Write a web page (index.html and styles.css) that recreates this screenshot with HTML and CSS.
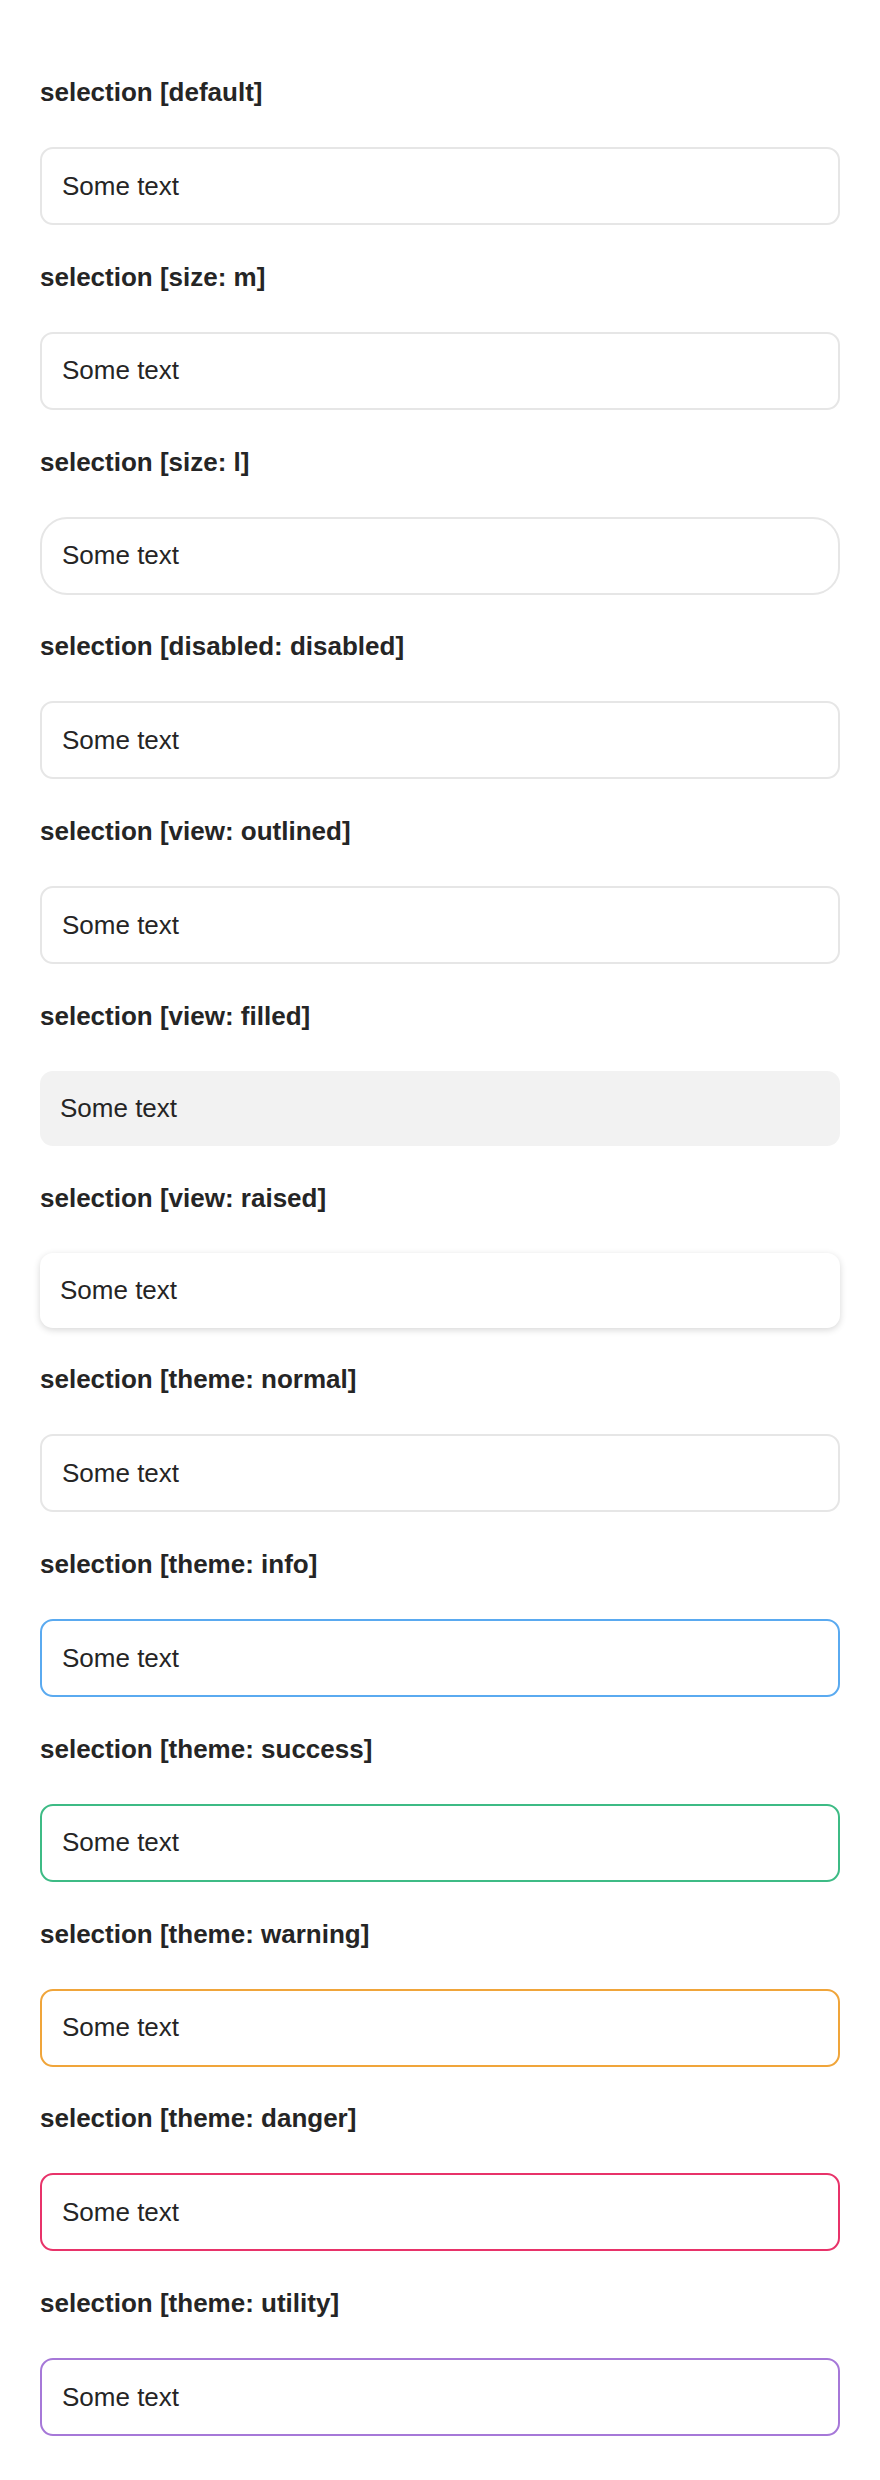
FILE: index.html
```html
<!DOCTYPE html>
<html>
<head>
<meta charset="utf-8">
<link rel="stylesheet" href="styles.css">
</head>
<body>
<main class="page">
  <section class="case"><h3 class="title">selection [default]</h3><div class="field"><span>Some text</span></div></section>
  <section class="case"><h3 class="title">selection [size: m]</h3><div class="field"><span>Some text</span></div></section>
  <section class="case"><h3 class="title">selection [size: l]</h3><div class="field field--l"><span>Some text</span></div></section>
  <section class="case"><h3 class="title">selection [disabled: disabled]</h3><div class="field"><span>Some text</span></div></section>
  <section class="case"><h3 class="title">selection [view: outlined]</h3><div class="field"><span>Some text</span></div></section>
  <section class="case"><h3 class="title">selection [view: filled]</h3><div class="field field--filled"><span>Some text</span></div></section>
  <section class="case"><h3 class="title">selection [view: raised]</h3><div class="field field--raised"><span>Some text</span></div></section>
  <section class="case"><h3 class="title">selection [theme: normal]</h3><div class="field"><span>Some text</span></div></section>
  <section class="case"><h3 class="title">selection [theme: info]</h3><div class="field field--info"><span>Some text</span></div></section>
  <section class="case"><h3 class="title">selection [theme: success]</h3><div class="field field--success"><span>Some text</span></div></section>
  <section class="case"><h3 class="title">selection [theme: warning]</h3><div class="field field--warning"><span>Some text</span></div></section>
  <section class="case"><h3 class="title">selection [theme: danger]</h3><div class="field field--danger"><span>Some text</span></div></section>
  <section class="case"><h3 class="title">selection [theme: utility]</h3><div class="field field--utility"><span>Some text</span></div></section>
</main>
</body>
</html>
```

FILE: styles.css
```css
* { box-sizing: border-box; }
html, body { margin: 0; padding: 0; background: #fff; }
body {
  font-family: "Liberation Sans", Arial, sans-serif;
  color: #252525;
}
.page {
  padding: 73px 40px 40px;
  display: flex;
  flex-direction: column;
  gap: 32.75px;
}
.case {
  display: flex;
  flex-direction: column;
}
.title {
  margin: 0 0 35px;
  font-size: 26px;
  line-height: 39px;
  font-weight: 700;
  color: #252525;
}
.field {
  height: 78px;
  display: flex;
  align-items: center;
  padding: 0 20px;
  border: 2px solid #e6e6e6;
  border-radius: 13px;
  font-size: 26px;
  line-height: 39px;
  color: #252525;
  background: #fff;
}
.field--l { border-radius: 27px; }
.field--filled {
  border: none;
  height: 75px;
  padding: 0 20px;
  background: #f2f2f2;
}
.field--raised {
  border: none;
  height: 75px;
  padding: 0 20px;
  background: #fff;
  box-shadow: 0 2px 7px rgba(0, 0, 0, 0.16);
}
.field--info { border-color: #5aaaf0; }
.field--success { border-color: #3dbb85; }
.field--warning { border-color: #f0a53a; }
.field--danger { border-color: #e8336a; }
.field--utility { border-color: #a678d8; }
```
